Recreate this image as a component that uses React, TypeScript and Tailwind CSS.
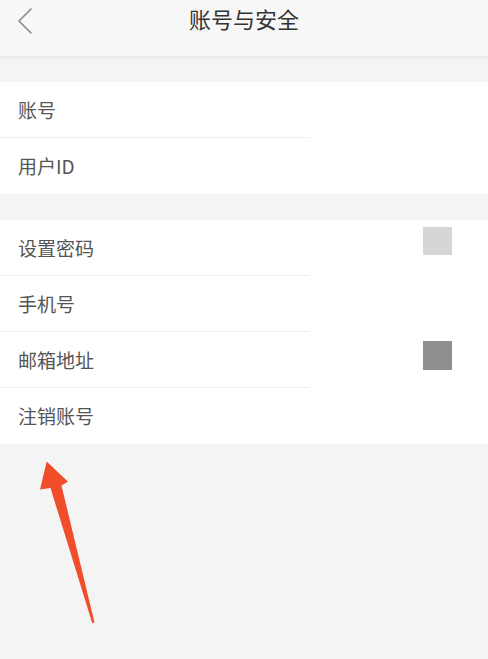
import type { ReactNode } from 'react';

const font = { fontFamily: '"Noto Sans CJK SC", "Noto Sans", sans-serif' };

function Row({ label, divider = true, right }: { label: string; divider?: boolean; right?: ReactNode }) {
  return (
    <div className="relative flex h-[56px] items-center justify-between bg-white pl-[18px] pr-[36px]">
      <span className="-mt-[2px] text-[19px] leading-none text-[#555]">{label}</span>
      {right}
      {divider && <div className="absolute bottom-0 left-0 h-px w-[310px] bg-[#eeeeee]" />}
    </div>
  );
}

export default function App() {
  return (
    <div className="relative flex h-[659px] w-[488px] flex-col overflow-hidden bg-[#f4f4f4]" style={font}>
      <div className="relative z-10 flex h-[56px] shrink-0 items-center justify-center bg-[#f7f7f7] shadow-[0_2px_4px_rgba(0,0,0,0.06)]">
        <svg className="absolute left-[15px] top-[7px]" width="20" height="28" viewBox="0 0 20 28" fill="none">
          <path d="M16 2 L4 14 L16 26" stroke="#8a8a8a" strokeWidth="1.6" strokeLinecap="round" strokeLinejoin="round" />
        </svg>
        <span className="-mt-[20px] text-[22px] leading-none text-[#333]">账号与安全</span>
      </div>

      <div className="mt-[26px] flex flex-col">
        <Row label="账号" />
        <Row label="用户ID" divider={false} />
      </div>

      <div className="mt-[26px] flex flex-col">
        <Row label="设置密码" right={<div className="-mt-[14px] h-[28px] w-[29px] bg-[#d6d6d6]" />} />
        <Row label="手机号" />
        <Row label="邮箱地址" right={<div className="-mt-[9px] h-[29px] w-[29px] bg-[#8f8f8f]" />} />
        <Row label="注销账号" divider={false} />
      </div>

      <svg className="absolute left-0 top-[450px]" width="120" height="190" viewBox="0 450 120 190">
        <path d="M46.7 461.5 L68 481.8 L61.5 485.5 L94.5 622.5 L92.2 623 L50.5 488 L40 489.5 Z" fill="#f04e2b" />
      </svg>
    </div>
  );
}
